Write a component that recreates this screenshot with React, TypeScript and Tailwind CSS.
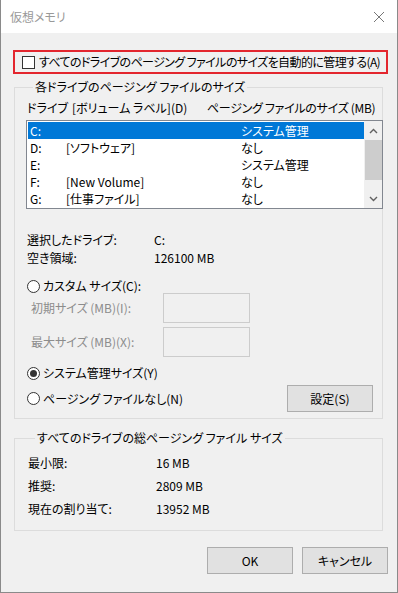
const font = "font-['Noto_Sans_CJK_JP',sans-serif] [font-feature-settings:'palt']"

const Radio = ({ checked }: { checked?: boolean }) => (
  <span className="w-[13px] h-[13px] rounded-full border border-[#333] bg-white flex items-center justify-center shrink-0">
    {checked && <span className="w-[7px] h-[7px] rounded-full bg-[#333]" />}
  </span>
)

const rows = [
  { d: 'C:', l: '', s: 'システム管理', sel: true },
  { d: 'D:', l: '[ソフトウェア]', s: 'なし' },
  { d: 'E:', l: '', s: 'システム管理' },
  { d: 'F:', l: '[New Volume]', s: 'なし' },
  { d: 'G:', l: '[仕事ファイル]', s: 'なし' },
]

const Chevron = ({ up }: { up?: boolean }) => (
  <svg width="9" height="6" viewBox="0 0 9 6" fill="none" stroke="#606060" strokeWidth="1.4">
    {up ? <path d="M1 5 L4.5 1.5 L8 5" /> : <path d="M1 1 L4.5 4.5 L8 1" />}
  </svg>
)

const App = () => {
  return (
    <div className={`w-[398px] h-[593px] bg-[#f0f0f0] border-x border-b border-[#8a8a8a] text-[12px] text-black flex flex-col ${font}`}>
      <div className="h-[33px] bg-white flex items-center justify-between pl-[9px] pr-[12px] shrink-0">
        <span className="text-[#999] text-[12px]">仮想メモリ</span>
        <svg width="12" height="12" viewBox="0 0 12 12" stroke="#777" strokeWidth="1">
          <path d="M1 1 L11 11 M11 1 L1 11" />
        </svg>
      </div>

      <div className="flex flex-col pl-[13px] pr-[13px]">
        <div className="mt-[17px] ml-[-1px] mr-[-4px] h-[24px] border-2 border-[#e3262e] flex items-center pl-[7px]">
          <span className="w-[13px] h-[13px] border border-[#333] bg-white shrink-0" />
          <span className="ml-[4px] leading-[16px] whitespace-nowrap tracking-[-0.6px]">すべてのドライブのページング ファイルのサイズを自動的に管理する(A)</span>
        </div>

        <fieldset className="mt-[5px] border border-[#dcdcdc] pl-[11px] pr-0 pb-[6px] mr-[1px]">
          <legend className="ml-[7px] px-[2px] leading-[16px]">各ドライブのページング ファイルのサイズ</legend>
          <div className="flex leading-[16px] mt-[5px] pl-[1px] whitespace-nowrap">
            <span className="w-[45px]">ドライブ</span>
            <span className="w-[135px]">[ボリューム ラベル](D)</span>
            <span className="tracking-[-0.3px]">ページング ファイルのサイズ (MB)</span>
          </div>
          <div className="mt-[4px] h-[89px] border border-[#828790] bg-white flex mr-[-1px]">
            <div className="flex-1 pt-[1px] pl-[1px]">
              {rows.map((r) => (
                <div key={r.d} className={`h-[17px] flex items-center leading-[17px] ${r.sel ? 'bg-[#0078d7] text-white' : ''}`}>
                  <span className="w-[38px] pl-[2px]">{r.d}</span>
                  <span className="w-[175px]">{r.l}</span>
                  <span>{r.s}</span>
                </div>
              ))}
            </div>
            <div className="w-[18px] bg-[#f0f0f0] flex flex-col items-center">
              <div className="h-[19px] flex items-center justify-center"><Chevron up /></div>
              <div className="w-[17px] h-[40px] bg-[#cdcdcd]" />
              <div className="flex-1" />
              <div className="h-[19px] flex items-center justify-center"><Chevron /></div>
            </div>
          </div>

          <div className="mt-[22px] flex leading-[18px] pl-[1px]">
            <span className="w-[127px]">選択したドライブ:</span>
            <span>C:</span>
          </div>
          <div className="flex leading-[18px] pl-[1px]">
            <span className="w-[127px]">空き領域:</span>
            <span>126100 MB</span>
          </div>

          <div className="mt-[10px] flex items-center leading-[18px] pl-[1px]">
            <Radio />
            <span className="ml-[3px]">カスタム サイズ(C):</span>
          </div>
          <div className="mt-[-2px] flex items-center pl-[5px] text-[#8c8c8c]">
            <span className="w-[132px]">初期サイズ (MB)(I):</span>
            <div className="w-[87px] h-[30px] border border-[#cccccc] bg-[#f0f0f0]" />
          </div>
          <div className="mt-[4px] flex items-center pl-[5px] text-[#8c8c8c]">
            <span className="w-[132px]">最大サイズ (MB)(X):</span>
            <div className="w-[87px] h-[30px] border border-[#cccccc] bg-[#f0f0f0]" />
          </div>

          <div className="mt-[7px] flex items-center leading-[18px] pl-[1px]">
            <Radio checked />
            <span className="ml-[3px]">システム管理サイズ(Y)</span>
          </div>
          <div className="mt-[3px] flex items-center justify-between pl-[1px] pr-[9px]">
            <div className="flex items-center">
              <Radio />
              <span className="ml-[3px]">ページング ファイルなし(N)</span>
            </div>
            <button className="w-[86px] h-[27px] bg-[#e1e1e1] border border-[#adadad] flex items-center justify-center">設定(S)</button>
          </div>
        </fieldset>

        <fieldset className="mt-[11px] border border-[#dcdcdc] pl-[13px] pb-[10px] mr-[1px]">
          <legend className="ml-[7px] px-[2px] leading-[16px]">すべてのドライブの総ページング ファイル サイズ</legend>
          <div className="mt-[5px] flex flex-col">
            {[
              ['最小限:', '16 MB'],
              ['推奨:', '2809 MB'],
              ['現在の割り当て:', '13952 MB'],
            ].map(([k, v]) => (
              <div key={k} className="flex h-[23px] items-center">
                <span className="w-[128px]">{k}</span>
                <span>{v}</span>
              </div>
            ))}
          </div>
        </fieldset>

        <div className="mt-[16px] flex justify-end gap-[9px] mr-[-4px]">
          <button className="w-[86px] h-[27px] bg-[#e1e1e1] border border-[#adadad]">OK</button>
          <button className="w-[86px] h-[27px] bg-[#e1e1e1] border border-[#adadad]">キャンセル</button>
        </div>
      </div>
    </div>
  )
}

export default App
